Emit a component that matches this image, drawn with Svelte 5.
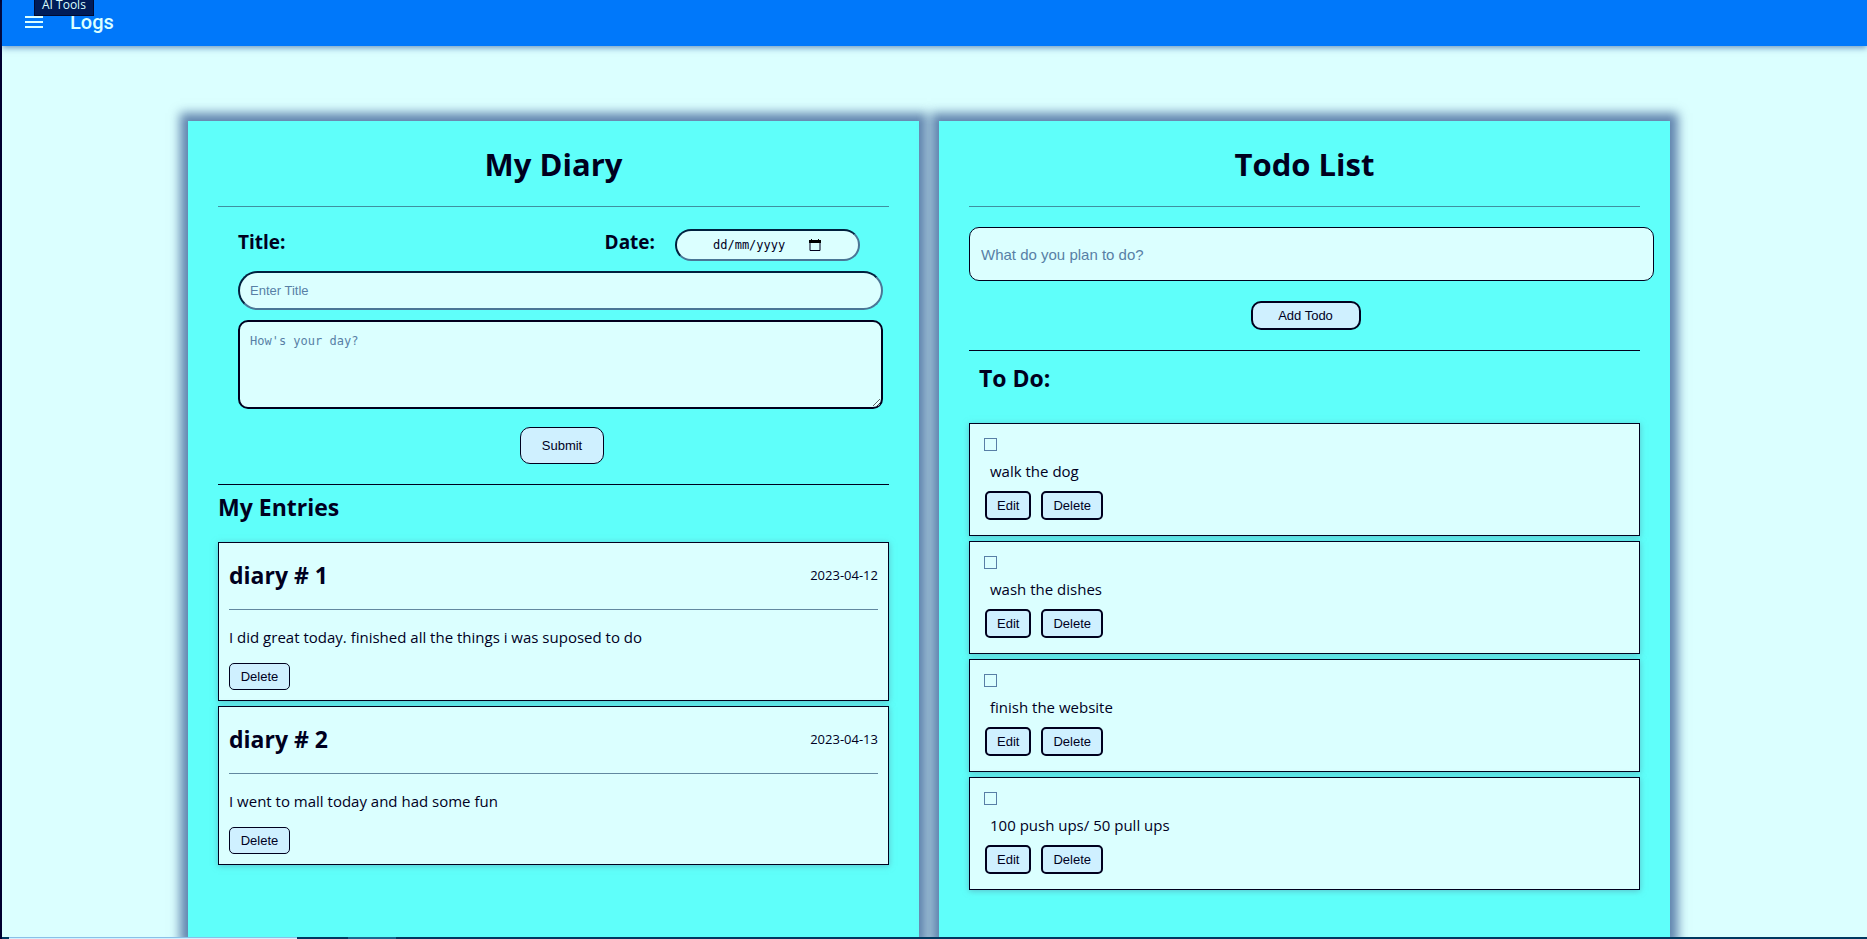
<script>
  let entries = $state([
    { id: 1, title: 'diary # 1', date: '2023-04-12', text: 'I did great today. finished all the things i was suposed to do' },
    { id: 2, title: 'diary # 2', date: '2023-04-13', text: 'I went to mall today and had some fun' }
  ]);
  let todos = $state([
    { id: 1, text: 'walk the dog', done: false },
    { id: 2, text: 'wash the dishes', done: false },
    { id: 3, text: 'finish the website', done: false },
    { id: 4, text: '100 push ups/ 50 pull ups', done: false }
  ]);
  let title = $state('');
  let date = $state('');
  let body = $state('');
  let plan = $state('');
  let nextId = 10;

  function addEntry(event) {
    event.preventDefault();
    if (!title) return;
    entries.push({ id: nextId++, title, date, text: body });
    title = '';
    date = '';
    body = '';
  }
  function addTodo(event) {
    event.preventDefault();
    if (!plan) return;
    todos.push({ id: nextId++, text: plan, done: false });
    plan = '';
  }
  function removeEntry(id) {
    entries = entries.filter((entry) => entry.id !== id);
  }
  function removeTodo(id) {
    todos = todos.filter((todo) => todo.id !== id);
  }
  function editTodo(todo) {
    plan = todo.text;
    removeTodo(todo.id);
  }
</script>

<div class="app">
  <header>
    <button class="menu" aria-label="Menu">
      <svg viewBox="0 0 24 24" width="24" height="24"><path d="M3 18h18v-2H3v2zm0-5h18v-2H3v2zm0-7v2h18V6H3z" /></svg>
    </button>
    <span class="brand">Logs</span>
    <span class="tip">AI Tools</span>
  </header>

  <main>
    <section>
      <h1>My Diary</h1>
      <hr />
      <form class="diary-form" onsubmit={addEntry}>
        <div class="labels">
          <label class="name" for="entry-title">Title:</label>
          <label class="name" for="entry-date">Date:</label>
          <div class="date-field">
            <input id="entry-date" placeholder="dd/mm/yyyy" bind:value={date} />
            <button type="button" aria-label="Pick a date">
              <svg viewBox="0 0 12 13" width="12" height="13"><path d="M1 2.5h10v9H1z" fill="none" stroke="currentColor" /><path d="M0 1h12v3H0zM2 0h1v2H2zM9 0h1v2H9z" /></svg>
            </button>
          </div>
        </div>
        <input id="entry-title" class="title-input" placeholder="Enter Title" bind:value={title} />
        <textarea aria-label="Entry" placeholder="How's your day?" bind:value={body}></textarea>
        <button class="submit">Submit</button>
      </form>
      <hr class="dark" />
      <h2>My Entries</h2>
      <div class="cards">
        {#each entries as entry (entry.id)}
          <article class="entry">
            <div class="entry-head">
              <h3>{entry.title}</h3>
              <time>{entry.date}</time>
            </div>
            <hr />
            <p>{entry.text}</p>
            <button onclick={() => removeEntry(entry.id)}>Delete</button>
          </article>
        {/each}
      </div>
    </section>

    <section>
      <h1>Todo List</h1>
      <hr />
      <form class="todo-form" onsubmit={addTodo}>
        <input aria-label="Todo" placeholder="What do you plan to do?" bind:value={plan} />
        <button>Add Todo</button>
      </form>
      <hr class="dark" />
      <h2 class="todo-heading">To Do:</h2>
      <ul class="cards">
        {#each todos as todo (todo.id)}
          <li class="todo">
            <input id="todo-{todo.id}" type="checkbox" bind:checked={todo.done} />
            <label for="todo-{todo.id}">{todo.text}</label>
            <div class="actions">
              <button onclick={() => editTodo(todo)}>Edit</button>
              <button onclick={() => removeTodo(todo.id)}>Delete</button>
            </div>
          </li>
        {/each}
      </ul>
    </section>
  </main>

  <div class="dock" aria-hidden="true">
    <span class="search"></span>
    <span class="pinned"></span>
  </div>
</div>

<style>
  :global(body) {
    background: #dbffff;
  }
  .app {
    display: flex;
    flex-direction: column;
    min-height: 100vh;
    box-sizing: border-box;
    border-left: 2px solid #000030;
    color: #00001e;
    font: 15px/22px 'Open Sans', 'Noto Sans', sans-serif;
  }
  input,
  textarea,
  button {
    box-sizing: border-box;
    margin: 0;
    color: inherit;
    font: 13px/16px 'Liberation Sans', Arial, sans-serif;
  }
  input,
  textarea {
    background: #dbffff;
  }
  input::placeholder,
  textarea::placeholder {
    color: #587fa6;
    opacity: 1;
  }
  button {
    background: #cff0ff;
    border: 1px solid #00001e;
    cursor: pointer;
  }
  h1,
  h2,
  h3,
  p,
  ul {
    margin: 0;
    padding: 0;
  }
  hr {
    width: 100%;
    height: 1px;
    margin: 0;
    border: 0;
    background: #3f90a0;
  }
  hr.dark {
    background: #00001e;
  }

  header {
    position: relative;
    z-index: 1;
    display: flex;
    align-items: center;
    gap: 24px;
    height: 46px;
    box-sizing: border-box;
    padding: 0 20px 2px;
    background: #0078fa;
    box-shadow: 0 2px 6px rgba(0, 50, 140, 0.5);
    color: #dbffff;
  }
  .menu {
    display: flex;
    padding: 0;
    border: 0;
    background: none;
    color: inherit;
  }
  .menu svg {
    fill: currentColor;
  }
  .brand {
    font: 500 20px/24px Roboto, sans-serif;
  }
  .tip {
    position: absolute;
    top: -5px;
    left: 32px;
    padding: 0 7px 2px;
    border: 1px solid #000a30;
    background: #001c58;
    font-size: 12px;
    line-height: 17px;
  }

  main {
    flex: 1;
    display: grid;
    grid-template-columns: 1fr 1fr;
    gap: 20px;
    padding: 75px 197px 0 186px;
    overflow: hidden;
  }
  section {
    padding: 22px 30px 46px;
    background: #5ffffa;
    box-shadow: 0 0 10px 8px rgba(0, 35, 110, 0.56);
    min-width: 0;
  }
  h1 {
    margin-bottom: 20px;
    font-size: 31px;
    line-height: 43px;
    text-align: center;
  }
  h2,
  h3 {
    font-size: 23px;
    line-height: 32px;
  }
  h2 {
    margin: 6px 0 19px;
  }

  .diary-form {
    display: flex;
    flex-direction: column;
    gap: 10px;
    margin-bottom: 20px;
    padding: 22px 6px 0 20px;
  }
  .labels {
    display: flex;
    padding-right: 23px;
  }
  .name {
    font-size: 19px;
    font-weight: 700;
    line-height: 26px;
  }
  .labels .name:first-child {
    margin-right: auto;
  }
  .date-field {
    display: flex;
    align-items: center;
    gap: 12px;
    width: 185px;
    height: 32px;
    box-sizing: border-box;
    margin-left: 20px;
    padding-left: 36px;
    border: 2px solid;
    border-color: #00203e #4a7696 #4a7696 #00203e;
    border-radius: 16px;
    background: #dbffff;
  }
  .date-field input {
    width: 84px;
    padding: 0;
    border: 0;
    font: 12px/16px 'DejaVu Sans Mono', monospace;
  }
  .date-field input::placeholder {
    color: #00001e;
  }
  .date-field button {
    display: flex;
    padding: 0;
    border: 0;
    background: none;
  }
  .title-input {
    height: 39px;
    padding: 0 10px;
    border: 2px solid;
    border-color: #00203e #4a7696 #4a7696 #00203e;
    border-radius: 20px;
  }
  textarea {
    height: 89px;
    padding: 10px;
    border: 2px solid #00001e;
    border-radius: 10px;
    font: 12px/18px 'DejaVu Sans Mono', monospace;
  }
  .submit {
    align-self: center;
    width: 84px;
    height: 37px;
    margin: 8px 0 0 3px;
    border-radius: 10px;
  }

  .cards {
    display: flex;
    flex-direction: column;
    gap: 5px;
    list-style: none;
  }
  .entry,
  .todo {
    border: 1px solid #00001e;
    background: #dbffff;
    box-shadow: 0 1px 6px rgba(90, 150, 170, 0.6);
  }
  .entry {
    padding: 16px 10px 10px;
  }
  .entry-head {
    display: flex;
    align-items: center;
    justify-content: space-between;
    margin-bottom: 18px;
  }
  .entry hr {
    background: #6288a0;
  }
  time {
    font-size: 13px;
  }
  .entry p {
    margin: 16px 0 15px;
  }
  .entry button {
    width: 61px;
    height: 27px;
    border-radius: 5px;
  }

  .todo-form {
    display: flex;
    flex-direction: column;
    align-items: center;
    gap: 20px;
    margin: 20px -14px 20px 0;
  }
  .todo-form input {
    width: 100%;
    height: 54px;
    padding: 0 11px;
    border: 1px solid #00001e;
    border-radius: 10px;
    font-size: 15px;
  }
  .todo-form button {
    width: 110px;
    height: 29px;
    margin-right: 12px;
    border: 2px solid #00001e;
    border-radius: 10px;
  }
  .todo-heading {
    margin: 11px 10px 29px;
  }
  .todo {
    display: flex;
    flex-direction: column;
    align-items: flex-start;
    padding: 14px 14px 15px;
  }
  .todo input {
    appearance: none;
    width: 13px;
    height: 13px;
    border: 1px solid #587fa6;
  }
  .todo input:checked {
    background: #0078fa;
  }
  .todo label {
    margin: 9px 6px;
  }
  .actions {
    display: flex;
    gap: 10px;
    padding-left: 1px;
  }
  .actions button {
    height: 29px;
    padding: 0 10px;
    border: 2px solid #00001e;
    border-radius: 5px;
  }

  .dock {
    display: flex;
    gap: 51px;
    height: 2px;
    padding-left: 7px;
    background: #003860;
  }
  .search {
    width: 288px;
    box-sizing: border-box;
    border-top: 1px solid #8ac0e8;
    background: #d5f0ff;
  }
  .pinned {
    width: 48px;
    background: #1a6890;
  }
</style>
